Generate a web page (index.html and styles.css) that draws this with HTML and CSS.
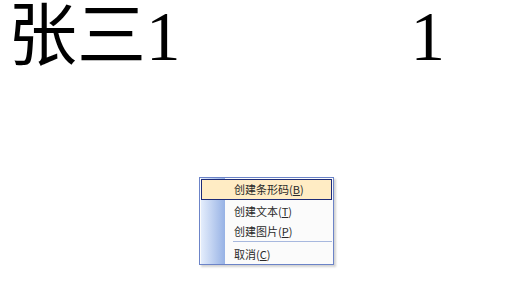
FILE: index.html
```html
<!DOCTYPE html>
<html>
<head>
<meta charset="utf-8">
<link rel="stylesheet" href="styles.css">
</head>
<body>
<div class="row">
  <span class="cell name">张三1</span>
  <span class="cell num">1</span>
</div>
<div class="menu">
  <div class="item active">创建条形码(<u>B</u>)</div>
  <div class="item">创建文本(<u>T</u>)</div>
  <div class="item">创建图片(<u>P</u>)</div>
  <div class="sep"></div>
  <div class="item">取消(<u>C</u>)</div>
</div>
</body>
</html>
```
FILE: styles.css
```css
html, body {
  margin: 0;
  padding: 0;
  background: #ffffff;
}
body {
  width: 505px;
  height: 285px;
  position: relative;
  overflow: hidden;
}
.row {
  display: flex;
  align-items: baseline;
  padding-left: 8px;
  margin-top: -20px;
  font-family: "Liberation Serif", "Noto Sans CJK SC", serif;
  font-size: 69px;
  line-height: normal;
  color: #000;
}
.num {
  margin-left: 230px;
}
.menu {
  position: absolute;
  left: 199px;
  top: 177px;
  width: 131px;
  padding: 1px;
  border: 1px solid #6c84c8;
  background: linear-gradient(90deg, #fbfbfb 1px, #e4edfc 1px, #97b2e5 25px, #fbfbfb 25px);
  box-shadow: 2px 2px 2px rgba(0, 0, 0, 0.18);
  font-family: "Noto Sans CJK SC", "Noto Sans", sans-serif;
  font-size: 11px;
  color: #2a2a2a;
}
.item {
  height: 20px;
  line-height: 20px;
  padding-left: 32px;
  border: 1px solid transparent;
  box-sizing: border-box;
}
.item u {
  text-decoration: underline;
}
.active {
  height: 21px;
  line-height: 19px;
  background: #ffecc4;
  border-color: #1d2b78;
}
.sep {
  height: 3px;
  margin-left: 32px;
  background: linear-gradient(#a7b8de, #a7b8de) 0 1px / 100% 1px no-repeat;
}
```
